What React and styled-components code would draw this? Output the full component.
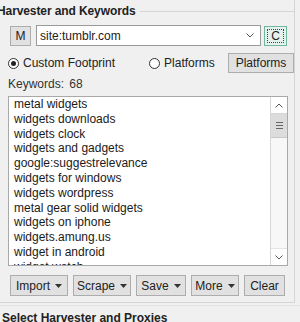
import React, { useState } from 'react';
import styled, { createGlobalStyle } from 'styled-components';

const GlobalStyle = createGlobalStyle`
  body {
    margin: 0;
    background: #f0f0f0;
    font-family: "Liberation Sans", Arial, sans-serif;
    font-size: 12px;
    color: #1e1e1e;
  }
`;

const Page = styled.div`
  width: 300px;
  height: 322px;
  overflow: hidden;
  background: #f0f0f0;
`;

const Group = styled.div`
  width: 295px;
  height: 303px;
  border-right: 1px solid #d5d5d5;
  border-bottom: 1px solid #d5d5d5;
  box-sizing: border-box;
`;

const TitleRow = styled.div`
  display: flex;
  align-items: center;
  height: 22px;
  margin-left: -3px;
  margin-right: -1px;

  &::after {
    content: '';
    flex: 1;
    height: 1px;
    background: #d5d5d5;
    margin-left: 4px;
  }
`;

const Title = styled.span`
  font-weight: bold;
  font-size: 12px;
  color: #222;
  letter-spacing: -0.1px;
`;

const Row = styled.div`
  display: flex;
  align-items: center;
  padding-left: ${({ pl }) => pl || 10}px;
  gap: ${({ gap }) => gap || 5}px;
  margin-top: ${({ mt }) => mt || 0}px;
`;

const Button = styled.button`
  height: ${({ h }) => h || 21}px;
  width: ${({ w }) => w}px;
  padding: 0;
  background: #e1e1e1;
  border: 1px solid #adadad;
  font-family: "Liberation Sans", Arial, sans-serif;
  font-size: 12px;
  color: #222;
  display: flex;
  align-items: center;
  justify-content: center;
  gap: 5px;
  box-sizing: border-box;
  flex: none;
`;

const FocusButton = styled(Button)`
  border-color: #6fb99c;
  outline: 1px dotted #444;
  outline-offset: -4px;
  background: #e5f1ec;
`;

const Combo = styled.div`
  width: 225px;
  height: 21px;
  box-sizing: border-box;
  border: 1px solid #9a9a9a;
  background: #fff;
  display: flex;
  align-items: center;
  justify-content: space-between;
  padding: 0 6px 0 3px;
  font-size: 12px;
  color: #222;
`;

const RadioLabel = styled.label`
  display: flex;
  align-items: center;
  gap: 4px;
  font-size: 12px;
  color: #222;
  width: ${({ w }) => w}px;
`;

const RadioCircle = styled.span`
  width: 11px;
  height: 11px;
  border-radius: 50%;
  border: 1px solid #333;
  background: #fff;
  box-sizing: border-box;
  display: flex;
  align-items: center;
  justify-content: center;

  &::after {
    content: '';
    width: 5px;
    height: 5px;
    border-radius: 50%;
    background: ${({ checked }) => (checked ? '#222' : 'transparent')};
  }
`;

const Count = styled.div`
  padding-left: 8px;
  margin-top: 4px;
  height: 14px;
  line-height: 14px;
  font-size: 12px;
  color: #333;
  word-spacing: 2px;
`;

const ListBox = styled.div`
  margin: 5px 0 0 8px;
  width: 280px;
  height: 170px;
  box-sizing: border-box;
  border: 1px solid #a9a9a9;
  background: #fff;
  display: flex;
  overflow: hidden;
`;

const Items = styled.ul`
  list-style: none;
  margin: 0;
  padding: 0 0 0 5px;
  flex: 1;
  overflow: hidden;
`;

const Item = styled.li`
  height: 14.8px;
  line-height: 14.8px;
  font-size: 12px;
  color: #1a1a1a;
  white-space: nowrap;
`;

const ScrollBar = styled.div`
  width: 17px;
  border-left: 1px solid #d6d6d6;
  background: #f7f7f7;
  display: flex;
  flex-direction: column;
  box-sizing: border-box;
`;

const ScrollBtn = styled.div`
  height: 16px;
  display: flex;
  align-items: center;
  justify-content: center;
  background: #fff;
  border-bottom: ${({ top }) => (top ? '1px solid #d6d6d6' : 'none')};
  border-top: ${({ top }) => (top ? 'none' : '1px solid #e4e4e4')};
  margin-top: ${({ top }) => (top ? 0 : 'auto')};
`;

const Thumb = styled.div`
  height: 23px;
  background: #dcdcdc;
  border-bottom: 1px solid #c8c8c8;
  display: flex;
  flex-direction: column;
  align-items: center;
  justify-content: center;
  gap: 2px;

  span {
    width: 7px;
    height: 1px;
    background: #666;
  }
`;

const Caret = () => (
  <svg width="7" height="4" viewBox="0 0 7 4">
    <path d="M0 0h7L3.5 4z" fill="#333" />
  </svg>
);

const Chevron = ({ up }) => (
  <svg width="8" height="5" viewBox="0 0 8 5">
    <path d={up ? 'M0.5 4.5L4 1l3.5 3.5' : 'M0.5 0.5L4 4l3.5-3.5'} fill="none" stroke="#555" strokeWidth="1" />
  </svg>
);

const NextTitle = styled.div`
  margin-top: 2px;
  border-top: 1px solid #e2e2e2;
  padding: 5px 0 0 2px;
  font-weight: bold;
  font-size: 12px;
  color: #222;
`;

const keywords = [
  'metal widgets',
  'widgets downloads',
  'widgets clock',
  'widgets and gadgets',
  'google:suggestrelevance',
  'widgets for windows',
  'widgets wordpress',
  'metal gear solid widgets',
  'widgets on iphone',
  'widgets.amung.us',
  'widget in android',
  'widget watch',
  'widgets for mac',
];

const App = () => {
  const [mode, setMode] = useState('custom');

  return (
    <Page>
      <GlobalStyle />
      <Group>
        <TitleRow>
          <Title>Harvester and Keywords</Title>
        </TitleRow>
        <Row mt={3} gap={5}>
          <Button w={21} h={20}>M</Button>
          <Combo>
            <span>site:tumblr.com</span>
            <Chevron />
          </Combo>
          <FocusButton w={23} h={20} style={{ marginLeft: -2 }}>C</FocusButton>
        </Row>
        <Row mt={7} pl={8} gap={0}>
          <RadioLabel w={138} onClick={() => setMode('custom')}>
            <RadioCircle checked={mode === 'custom'} />
            Custom Footprint
          </RadioLabel>
          <RadioLabel w={75} onClick={() => setMode('platforms')}>
            <RadioCircle checked={mode === 'platforms'} />
            Platforms
          </RadioLabel>
          <Button w={66} h={20}>Platforms</Button>
        </Row>
        <Count>Keywords: 68</Count>
        <ListBox>
          <Items>
            {keywords.map(k => (
              <Item key={k}>{k}</Item>
            ))}
          </Items>
          <ScrollBar>
            <ScrollBtn top><Chevron up /></ScrollBtn>
            <Thumb><span /><span /><span /></Thumb>
            <ScrollBtn><Chevron /></ScrollBtn>
          </ScrollBar>
        </ListBox>
        <Row mt={9} gap={5}>
          <Button w={58}>Import <Caret /></Button>
          <Button w={58}>Scrape <Caret /></Button>
          <Button w={50}>Save <Caret /></Button>
          <Button w={48}>More <Caret /></Button>
          <Button w={41}>Clear</Button>
        </Row>
      </Group>
      <NextTitle>Select Harvester and Proxies</NextTitle>
    </Page>
  );
};

export default App;
